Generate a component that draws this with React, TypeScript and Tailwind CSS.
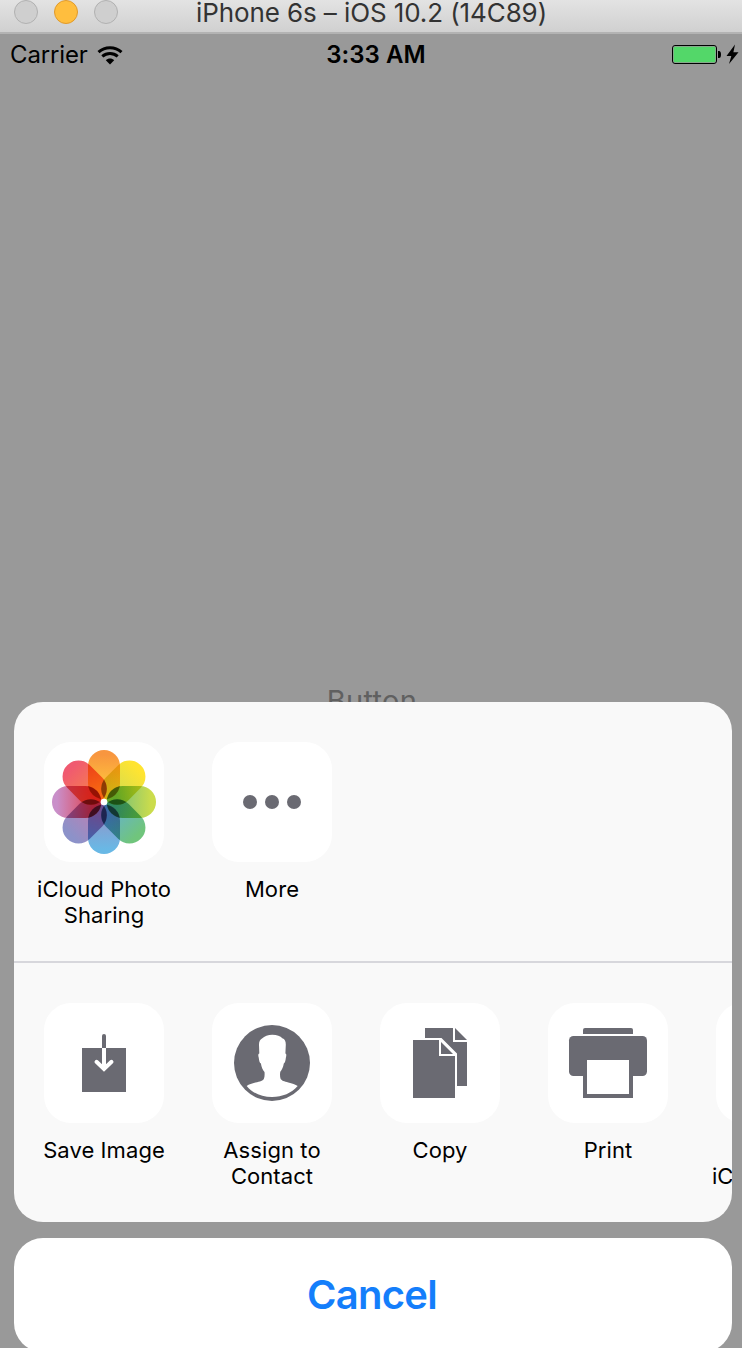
import type { ReactNode } from "react";

const GRAY = "#6a6a72";

const petals = [
  { angle: 0, outer: "#f8963f", inner: "#ffc93c" },
  { angle: 45, outer: "#ffe431", inner: "#d2dc50" },
  { angle: 90, outer: "#cbdc4c", inner: "#78c078" },
  { angle: 135, outer: "#70c57c", inner: "#66b2cc" },
  { angle: 180, outer: "#69b8e5", inner: "#9096ca" },
  { angle: 225, outer: "#8c92c9", inner: "#bc80b4" },
  { angle: 270, outer: "#c98fc9", inner: "#df4452" },
  { angle: 315, outer: "#f05a70", inner: "#f6804c" },
];

function PhotosIcon() {
  return (
    <svg viewBox="0 0 120 120" className="size-[120px] isolate">
      <defs>
        {petals.map((p) => (
          <linearGradient key={p.angle} id={`petal${p.angle}`} x1="0" y1="0" x2="0" y2="1">
            <stop offset="0.1" stopColor={p.outer} />
            <stop offset="0.8" stopColor={p.inner} />
          </linearGradient>
        ))}
      </defs>
      {petals.map((p) => (
        <rect
          key={p.angle}
          x="44"
          y="8"
          width="32"
          height="49.4"
          rx="16"
          fill={`url(#petal${p.angle})`}
          transform={`rotate(${p.angle} 60 60)`}
          className="mix-blend-multiply"
        />
      ))}
      {petals.map((p) => (
        <path
          key={p.angle}
          d="M60 37.500Q65.700 46.800 60 56Q54.300 46.800 60 37.500z"
          fill="#000"
          fillOpacity="0.3"
          transform={`rotate(${p.angle} 60 60)`}
        />
      ))}
      <circle cx="60" cy="60" r="3.3" fill="#fff" />
    </svg>
  );
}

function MoreIcon() {
  return (
    <svg viewBox="0 0 120 120" className="size-[120px]" fill={GRAY}>
      <circle cx="38" cy="60" r="7" />
      <circle cx="60" cy="60" r="7" />
      <circle cx="82" cy="60" r="7" />
    </svg>
  );
}

function SaveIcon() {
  return (
    <svg viewBox="0 0 120 120" className="size-[120px]" fill="none">
      <path d="M38 45h44v44H38z" fill={GRAY} />
      <path d="M58 45V33a2 2 0 0 1 4 0v12z" fill={GRAY} />
      <path d="M58 45h4v20h-4z" fill="#fff" />
      <path d="M52.500 58.800 60 66l7.500-7.200" stroke="#fff" strokeWidth="4" strokeLinecap="round" />
    </svg>
  );
}

function ContactIcon() {
  return (
    <svg viewBox="0 0 120 120" className="size-[120px]">
      <circle cx="60" cy="60" r="38" fill={GRAY} />
      <path
        d="M60.300 31.700C65 31.700 68.500 33 70.300 35.300C73 36 73.900 38.500 73.800 42L73.400 50.500C74.500 50.700 74.500 52.500 73.900 54.500C73.500 57.500 73 60 71.800 60.500C71.200 64 70.200 66.500 68.300 68.700C67.900 71 67.900 73.500 68.500 75.500C69.200 77.500 72.500 78.500 76.300 79.500C80 80.500 83.500 81.500 85.700 83C79.500 90 70.500 94 60 94C49.500 94 40.500 90 34.700 83C37 81.500 40 80.500 43.500 79.600C48 78.600 51.300 77.700 52 75.500C52.700 73.500 52.700 71 52.500 69C50.500 67 49.500 64 48.900 60.500C47.500 60 47.200 57.500 46.700 54.500C46 52.500 46.200 50.700 47.300 50.500L47 42C46.900 38.500 48 36.500 50 35.500C52.500 33 56 31.700 60.300 31.700Z"
        fill="#fff"
      />
    </svg>
  );
}

function CopyIcon() {
  return (
    <svg viewBox="0 0 120 120" className="size-[120px]" fill={GRAY}>
      <path d="M45 25H73V39H87V83H77V50.500L61.500 35H45z" />
      <path d="M75 25 87 37H75z" />
      <path d="M33 37H59V53H75V95H33z" />
      <path d="M61 39 73 51H61z" />
    </svg>
  );
}

function PrintIcon() {
  return (
    <svg viewBox="0 0 120 120" className="size-[120px]" fill={GRAY}>
      <path d="M35 31V27a2 2 0 0 1 2-2H83a2 2 0 0 1 2 2v4z" />
      <rect x="21" y="33" width="78" height="40" rx="4.500" />
      <path d="M35 60H85V95H35z" />
      <path d="M39 57H81V91H39z" fill="#fff" />
    </svg>
  );
}

function Item({ lines, children }: { lines: string[]; children?: ReactNode }) {
  return (
    <div className="flex w-[168px] shrink-0 flex-col items-center">
      <div className="size-[120px] overflow-hidden rounded-[27px] bg-white">{children}</div>
      <div className="mt-[14px] text-center text-[22px] leading-[26px] tracking-[0.08px] whitespace-nowrap text-black">
        {lines.map((l) => (
          <div key={l}>{l}</div>
        ))}
      </div>
    </div>
  );
}

function TitleBar() {
  return (
    <div className="grid h-[34px] shrink-0 grid-cols-[1fr_auto_1fr] border-b-2 border-[#b3b3b3] bg-linear-to-b from-[#e3e3e3] to-[#d0d0d0]">
      <div className="flex gap-4 pl-[14px]">
        <div className="size-6 rounded-full border border-[#b1b1b1] bg-[#cfcfcf]" />
        <div className="size-6 rounded-full border border-[#e09a2c] bg-[#ffbe3e]" />
        <div className="size-6 rounded-full border border-[#b1b1b1] bg-[#cfcfcf]" />
      </div>
      <div className="h-[26px] pl-px text-[26px] leading-[26px] tracking-[-0.1px] whitespace-nowrap text-[#333]">
        iPhone 6s – iOS 10.2 (14C89)
      </div>
      <div />
    </div>
  );
}

function StatusBar() {
  return (
    <div className="grid h-[42px] shrink-0 grid-cols-[1fr_auto_1fr] items-center pr-[3px] pl-[10px] text-[24px] leading-none text-black">
      <div className="flex items-center gap-[9px]">
        <span className="tracking-[-0.15px]">Carrier</span>
        <svg width="26" height="19" viewBox="0 0 26 19" fill="none" stroke="#000">
          <path d="M1.500 6.200C8 .3 18 .3 24.500 6.200" strokeWidth="3" />
          <path d="M5.300 10.300C9.800 6.400 16.200 6.400 20.700 10.300" strokeWidth="3" />
          <path d="M13 18.400 8.800 14.200C11 12 15 12 17.200 14.200z" fill="#000" stroke="none" />
        </svg>
      </div>
      <div className="pl-[3px] font-semibold tracking-[0.05px]">3:33 AM</div>
      <div className="flex items-center justify-end">
        <svg width="68" height="22" viewBox="0 0 68 22">
          <rect x="1.500" y="1.500" width="44" height="18" rx="2.500" fill="none" stroke="#000" />
          <rect x="2.700" y="2.700" width="41.600" height="15.600" rx="1" fill="#53d769" />
          <path d="M47 7h1q2 0 2 3.500t-2 3.500h-1z" fill="#000" />
          <path d="M64 .5 55.500 12H60.300L58 20 67.500 8.200H62.400z" fill="#000" />
        </svg>
      </div>
    </div>
  );
}

export default function App() {
  return (
    <div className="flex h-[1348px] w-[742px] flex-col overflow-hidden bg-[#999] font-['Inter','Liberation_Sans',sans-serif]">
      <TitleBar />
      <StatusBar />
      <div className="flex min-h-0 flex-1 flex-col">
        <div className="flex h-[626px] shrink-0 items-end justify-center overflow-hidden pl-[2px]">
          <div className="h-[17px] text-[29px] leading-[31px] tracking-[0.3px] text-[#606060]">Button</div>
        </div>
        <div className="mr-[10px] ml-[14px] h-[520px] shrink-0 overflow-hidden rounded-[29px] bg-[#f9f9f9]">
          <div className="flex h-[261px] border-b-2 border-[#d7d7dc] pt-10 pl-[6px]">
            <Item lines={["iCloud Photo", "Sharing"]}>
              <PhotosIcon />
            </Item>
            <Item lines={["More"]}>
              <MoreIcon />
            </Item>
          </div>
          <div className="flex pt-10 pl-[6px]">
            <Item lines={["Save Image"]}>
              <SaveIcon />
            </Item>
            <Item lines={["Assign to", "Contact"]}>
              <ContactIcon />
            </Item>
            <Item lines={["Copy"]}>
              <CopyIcon />
            </Item>
            <Item lines={["Print"]}>
              <PrintIcon />
            </Item>
            <Item lines={["Add to", "iCloud Drive"]} />
          </div>
        </div>
        <button className="mt-4 mr-[10px] ml-[14px] h-[114px] shrink-0 rounded-[29px] bg-white pr-[2px] text-[40px] font-semibold tracking-[-0.7px] text-[#147efb]">
          Cancel
        </button>
      </div>
    </div>
  );
}
